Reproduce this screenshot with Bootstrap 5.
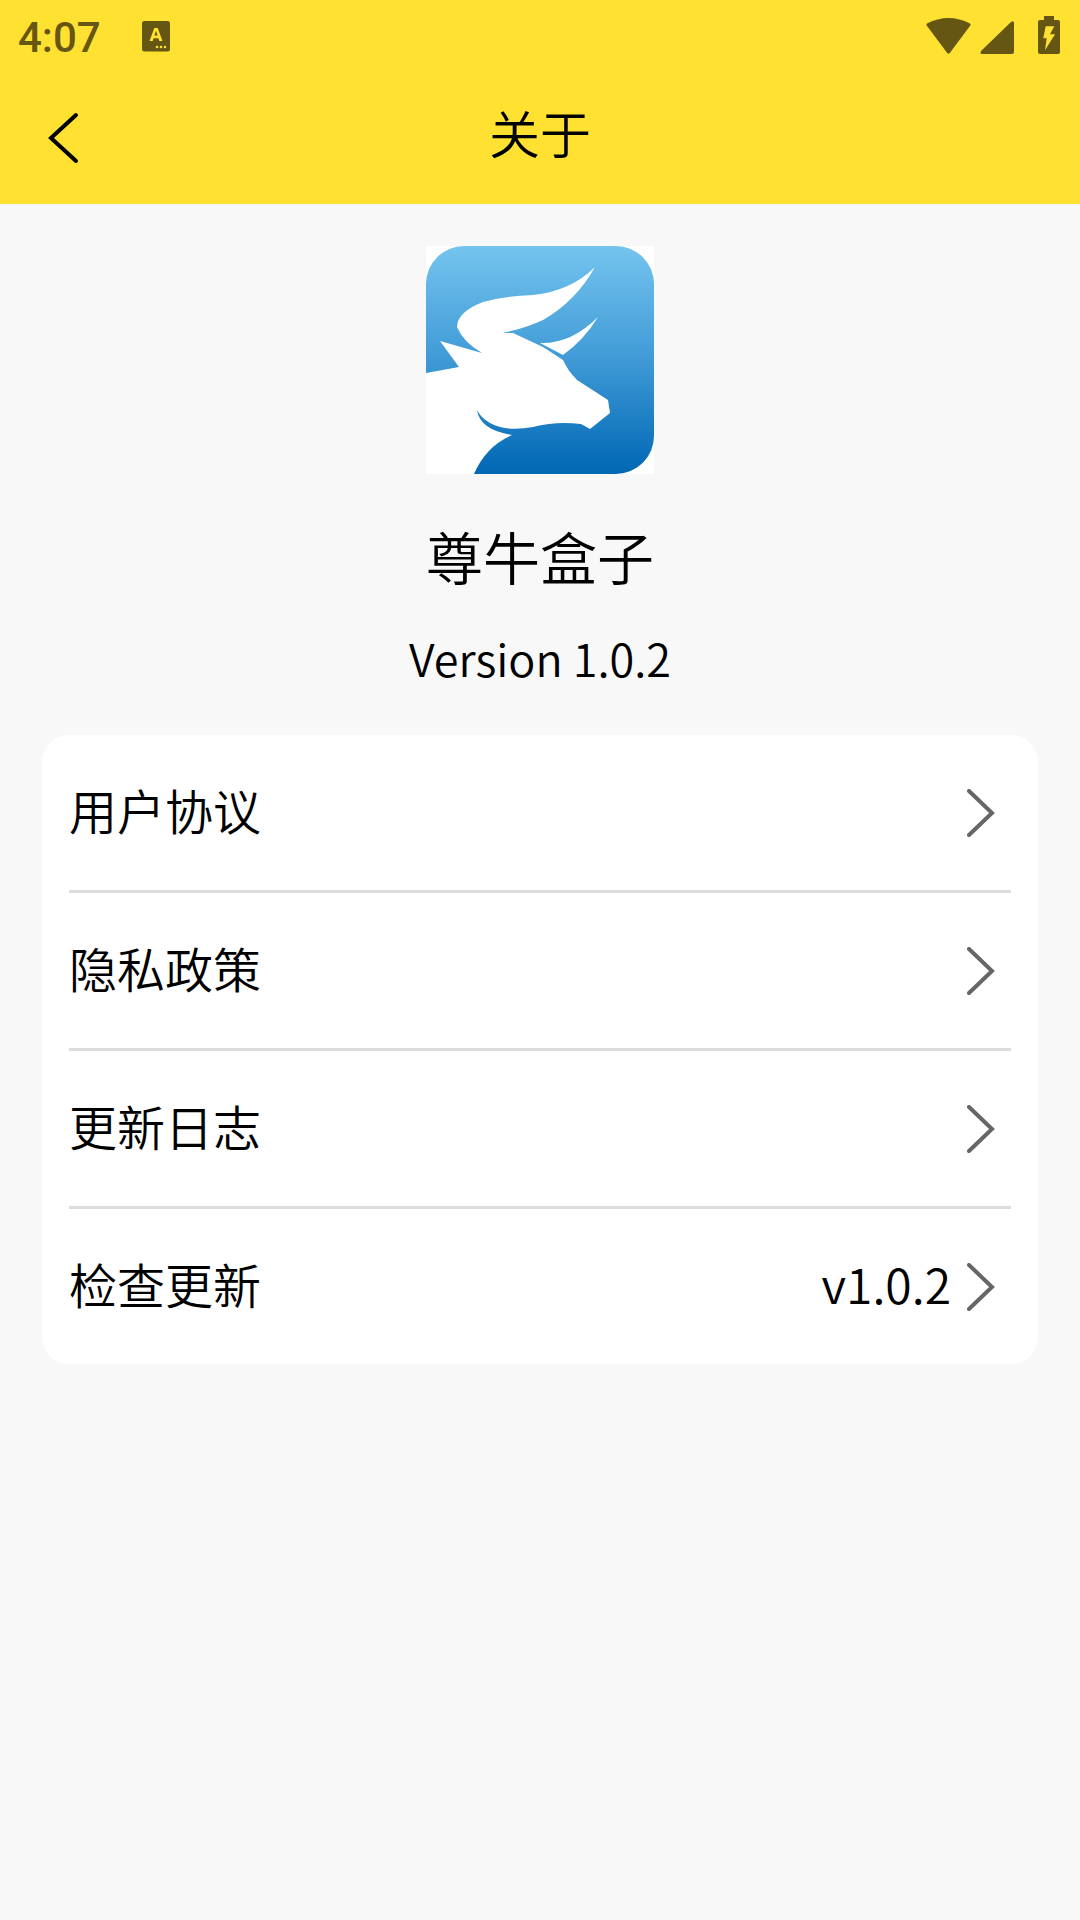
<!DOCTYPE html>
<html lang="zh">
<head>
<meta charset="utf-8">
<title>关于</title>
<link href="https://cdn.jsdelivr.net/npm/bootstrap@5.3.0/dist/css/bootstrap.min.css" rel="stylesheet">
<style>
html,body{margin:0;height:100%}
body{width:1080px;min-height:1920px;background:#f8f8f8;color:#000;font-family:"Noto Sans CJK SC","Noto Sans",sans-serif;font-weight:350}
.topbar{height:204px;background:#ffe231}
.statusrow{height:72px;padding:0 20px 0 18px;color:#655613;font:500 42px/72px Roboto,sans-serif}
.clock{width:123px;padding-top:4px}
.navrow{height:132px;position:relative;padding-bottom:12px}
.navtitle{font-size:51px;line-height:60px}
.backbtn{position:absolute;left:48px;top:39px;display:block;line-height:0}
.logoimg{display:block;width:228px;height:228px;margin-top:42px}
.appname{font-size:57px;line-height:80px;margin-top:41px}
.appver{font-size:45px;line-height:68px;margin-top:29px}
.menucard{margin:43px 42px 0;background:#fff;border-radius:27px;padding:0 27px}
.menurow{height:158px;font-size:48px;line-height:64px;border-bottom:3px solid #dcdcdc}
.menurow:last-child{height:155px;border-bottom:0}
.rowlabel{margin-bottom:7px}
.rowval{margin-right:16px;margin-bottom:7px}
.chev{display:block;margin-right:16px}
</style>
</head>
<body>
<header class="topbar">
  <div class="statusrow d-flex align-items-center">
    <span class="clock">4:07</span>
    <svg width="30" height="32" viewBox="0 0 30 32"><rect x="1" y="1" width="28" height="30.500" rx="2.500" fill="#655613"/><path d="M8.500 21L13.300 8h3.400l4.800 13h-3.200l-.9-2.800h-4.800L11.700 21zM13.400 15.600h3.200L15 10.800z" fill="#ffe231"/><circle cx="16" cy="27" r="1.300" fill="#ffe231"/><circle cx="20" cy="27" r="1.300" fill="#ffe231"/><circle cx="24" cy="27" r="1.300" fill="#ffe231"/></svg>
    <svg class="ms-auto" width="134" height="40" viewBox="0 0 134 40"><path d="M1 7.500Q22.500-3.500 44 7.500q1 .8.300 2L23.800 37q-1.300 1.500-2.600 0L.7 9.500q-.7-1.200.3-2z" fill="#655613"/><path d="M55 35L85 6q3-2 3 1.500V36q0 2-2 2H56q-2.500 0-1-3z" fill="#655613"/><path d="M118 0h10v4h4q2 0 2 2v30q0 2-2 2h-18q-2 0-2-2V6q0-2 2-2h4z" fill="#655613"/><path d="M119.700 10.300h8.600L124 18.300h5L119 34.300l1.700-12h-3.400z" fill="#ffe231"/></svg>
  </div>
  <div class="navrow d-flex align-items-center justify-content-center">
    <a class="backbtn" href="#" aria-label="返回"><svg width="32" height="54" viewBox="0 0 32 54"><path d="M28 4L3 27l25 23" fill="none" stroke="#000" stroke-width="4" stroke-linecap="round"/></svg></a>
    <span class="navtitle">关于</span>
  </div>
</header>
<main class="d-flex flex-column">
  <div class="d-flex flex-column align-items-center">
    <svg class="logoimg" viewBox="0 0 228 228">
      <defs><linearGradient id="lg" x1="0" y1="0" x2="0" y2="1"><stop offset="0" stop-color="#74c4ee"/><stop offset=".5" stop-color="#3f9ad6"/><stop offset="1" stop-color="#0067b4"/></linearGradient></defs>
      <rect width="228" height="228" fill="#fff"/>
      <rect width="228" height="228" rx="38" fill="url(#lg)"/>
      <path d="M0 127L33 121L14 95L56 107Q37 96 31 81Q31 66 57 56Q80 50 107 49Q145 45 169 21Q150 55 117 74Q100 82 77 87L87 87L117 101L137 114Q142 125 151 134L182 154L184 167L164 183L155 178Q130 175 107 181Q80 186 64 177Q55 172 51 164Q54 184 86 189Q60 200 48 228L0 228Z" fill="#fff"/>
      <path d="M114 97Q145 98 172 71Q158 94 137 109Z" fill="#fff"/>
    </svg>
    <div class="appname">尊牛盒子</div>
    <div class="appver">Version 1.0.2</div>
  </div>
  <div class="menucard">
    <div class="menurow d-flex align-items-center"><span class="rowlabel">用户协议</span><svg class="chev ms-auto" width="28" height="48" viewBox="0 0 28 48"><path d="M2 2l23 22L2 46" fill="none" stroke="#666" stroke-width="4" stroke-linecap="round"/></svg></div>
    <div class="menurow d-flex align-items-center"><span class="rowlabel">隐私政策</span><svg class="chev ms-auto" width="28" height="48" viewBox="0 0 28 48"><path d="M2 2l23 22L2 46" fill="none" stroke="#666" stroke-width="4" stroke-linecap="round"/></svg></div>
    <div class="menurow d-flex align-items-center"><span class="rowlabel">更新日志</span><svg class="chev ms-auto" width="28" height="48" viewBox="0 0 28 48"><path d="M2 2l23 22L2 46" fill="none" stroke="#666" stroke-width="4" stroke-linecap="round"/></svg></div>
    <div class="menurow d-flex align-items-center"><span class="rowlabel">检查更新</span><span class="rowval ms-auto">v1.0.2</span><svg class="chev" width="28" height="48" viewBox="0 0 28 48"><path d="M2 2l23 22L2 46" fill="none" stroke="#666" stroke-width="4" stroke-linecap="round"/></svg></div>
  </div>
</main>
</body>
</html>
